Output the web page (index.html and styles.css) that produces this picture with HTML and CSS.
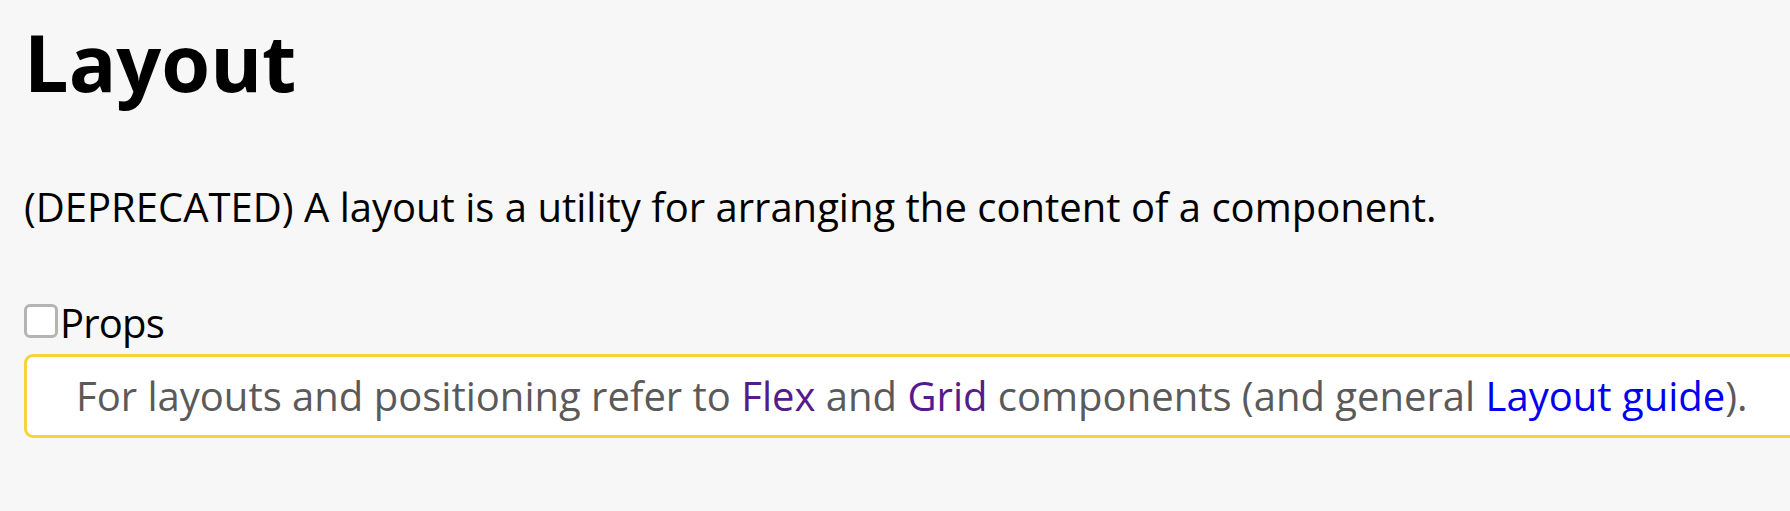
FILE: index.html
```html
<!DOCTYPE html>
<html lang="en">
<head>
<meta charset="utf-8">
<title>Layout</title>
<link rel="stylesheet" href="styles.css">
</head>
<body>
<main class="page">
  <h1 class="title">Layout</h1>
  <p class="lead">(DEPRECATED) A layout is a utility for arranging the content of a component.</p>
  <label class="props-toggle"><input class="props-check" type="checkbox"><span class="props-label">Props</span></label>
  <div class="notice">For layouts and positioning refer to <a class="link visited" href="#flex">Flex</a> and <a class="link visited" href="#grid">Grid</a> components (and general <a class="link" href="#layout-guide">Layout guide</a>).</div>
</main>
</body>
</html>
```
FILE: styles.css
```css
html {
  overflow: hidden;
  background: #f7f7f7;
}
body {
  margin: 0;
  font-family: "Open Sans", "Noto Sans", sans-serif;
  color: #000;
}
.page {
  padding: 16px 24px 0;
}
.title {
  margin: 0;
  font-size: 79px;
  line-height: 92px;
  font-weight: 700;
}
.lead {
  margin: 72px 0 0;
  font-size: 40px;
  line-height: 54px;
}
.props-toggle {
  display: flex;
  align-items: baseline;
  margin-top: 62px;
  font-size: 40px;
  line-height: 54px;
}
.props-label {
  letter-spacing: -0.8px;
}
.props-check {
  appearance: none;
  -webkit-appearance: none;
  margin: 0 2px 0 0;
  width: 34px;
  height: 34px;
  box-sizing: border-box;
  border: 3px solid #b4b4b4;
  border-radius: 6px;
  background: #fff;
  flex: none;
}
.notice {
  margin-top: 4px;
  width: 100%;
  padding: 12px 60px 12px 49px;
  border: 3px solid #f6d33c;
  border-radius: 9px;
  background: #fff;
  color: #5a5a5a;
  font-size: 40px;
  line-height: 54px;
  white-space: nowrap;
}
.link {
  color: #0000ee;
  text-decoration: none;
}
.link.visited {
  color: #551a8b;
}
```
